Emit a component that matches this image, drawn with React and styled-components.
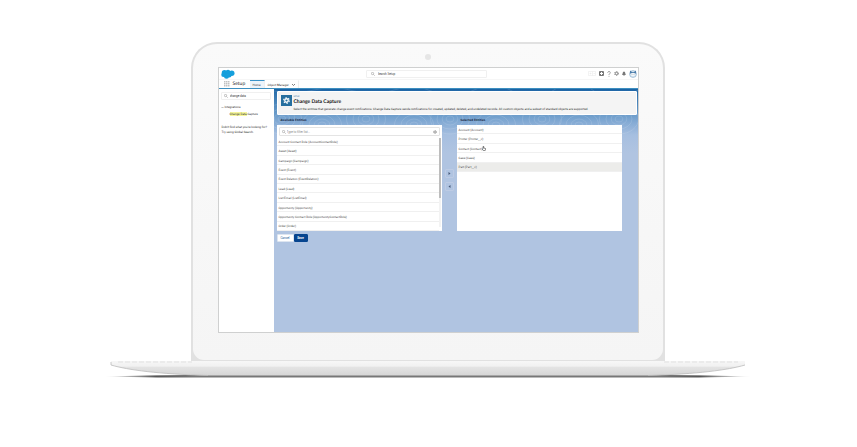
import React from 'react';
import styled, { createGlobalStyle } from 'styled-components';

const GlobalStyle = createGlobalStyle`
  * { box-sizing: border-box; }
  body { margin: 0; background: #fff; }
  body, input, button { font-family: Roboto, "Open Sans", sans-serif; }
  body { font-size: 3px; line-height: 4px; color: #2b2b2b; text-rendering: geometricPrecision; }
  ul, h1, h2, p { margin: 0; padding: 0; list-style: none; }
  svg { display: block; flex: none; }
`;

const Stage = styled.main`
  display: flex;
  flex-direction: column;
  align-items: center;
  padding: 42px 2px 56px 0;
`;

const LidCorner = styled.div`
  width: 100%;
  max-width: 474px;
  border-radius: 26px 26px 0 0;
  background: #e1e1e1;
  padding: 2px 2px 1px;
`;

const Lid = styled.div`
  border-radius: 24px 24px 11px 11px;
  background: linear-gradient(#fafafa, #f5f5f5);
  padding: 10px 24px 27px 25px;
`;

const Camera = styled.div`
  width: 6px;
  height: 6px;
  margin: 0 auto 7px;
  border-radius: 50%;
  background: #e6e6e6;
`;

const Screen = styled.div`
  display: flex;
  flex-direction: column;
  height: 266px;
  border: 1px solid #cfd0d0;
  background: #fff;
  overflow: hidden;
`;

const TopBar = styled.header`
  display: grid;
  grid-template-columns: 145fr 121fr 150fr;
  align-items: center;
  height: 11px;
  padding: 0 1px 0 2px;
`;

const SearchBox = styled.label`
  display: flex;
  align-items: center;
  gap: ${(p) => p.$gap}px;
  height: ${(p) => p.$height || 8}px;
  padding: 0 ${(p) => p.$pad}px;
  border: 1px solid ${(p) => p.$line || '#f0f0f0'};
  border-radius: 1px;
  background: #fff;
  input {
    flex: 1;
    min-width: 0;
    padding: 0;
    border: 0;
    outline: 0;
    background: none;
    font-size: 3px;
    line-height: 4px;
    height: 4px;
    color: #333;
  }
  input::placeholder { color: ${(p) => p.$hint || '#444'}; opacity: 1; }
`;

const Tools = styled.div`
  display: flex;
  justify-content: flex-end;
  align-items: center;
  gap: 3px;
`;

const IconButton = styled.button`
  display: grid;
  place-items: center;
  padding: 0;
  border: 0;
  background: none;
  color: #666;
`;

const NavBar = styled.nav`
  display: flex;
  align-items: center;
  height: 10px;
  padding-left: 5px;
  border-top: 1px solid #f6f6f6;
  border-bottom: 1px solid #3d8fc0;
`;

const AppName = styled.span`
  width: 20px;
  padding-left: 3px;
  font-family: Lato, sans-serif;
  font-size: 5px;
  line-height: 8px;
`;

const Tab = styled.a`
  display: flex;
  align-items: center;
  align-self: stretch;
  gap: 3px;
  padding: 0 3px;
  color: #333;
  text-decoration: none;
  border-top: 1px solid ${(p) => (p.$active ? '#3a93c9' : 'transparent')};
  border-right: 1px solid #eee;
  background: ${(p) => (p.$active ? '#edf4fa' : '#fff')};
`;

const Body = styled.div`
  display: flex;
  flex: 1;
  min-height: 0;
`;

const Sidebar = styled.aside`
  width: 55px;
  flex: none;
  padding: 3px 3px 0 2px;
  background: #fff;
`;

const TreeGroup = styled.div`
  display: flex;
  align-items: center;
  gap: 1px;
  margin-top: 4px;
  height: 6px;
`;

const TreeLink = styled.a`
  display: block;
  margin: 2px 0 9px 9px;
  color: #333;
  text-decoration: none;
  white-space: nowrap;
  mark { background: #f5f59a; color: #333; }
`;

const Hint = styled.p`
  padding-left: 1px;
  line-height: 5px;
  white-space: nowrap;
`;

const Main = styled.section`
  position: relative;
  flex: 1;
  min-width: 0;
  padding: 2px 1px 0 3px;
  background: linear-gradient(#1a62a4 0, #2d71ad 4px, #6d9dcb 26px, #87acd5 34px, #a6bfe0 46px, #b0c4e1 64px, #b0c4e1);
`;

const Contours = styled.svg`
  position: absolute;
  inset: 0 0 auto 0;
  width: 100%;
  height: 46px;
  opacity: 0.12;
`;

const Content = styled.div`
  position: relative;
`;

const PageHeader = styled.header`
  display: flex;
  gap: 2px;
  height: 24px;
  padding: 3px 3px 0;
  border: 1px solid #fff;
  border-radius: 1px;
  background: #f4f4f4;
`;

const AppTile = styled.div`
  display: grid;
  place-items: center;
  flex: none;
  width: 11px;
  height: 11px;
  background: #276f9f;
`;

const Eyebrow = styled.p`
  font-size: 2px;
  line-height: 4px;
  color: #2d6d9f;
`;

const Title = styled.h1`
  font-family: Lato, sans-serif;
  font-size: 5px;
  line-height: 6px;
  font-weight: 700;
  color: #111;
`;

const Summary = styled.p`
  margin-top: 2px;
`;

const Columns = styled.div`
  display: grid;
  grid-template-columns: 11fr 1fr 11fr;
  margin-right: 15px;
`;

const Label = styled.h2`
  padding: 3px 4px;
  font-size: 3px;
  line-height: 4px;
  font-family: "Open Sans", sans-serif;
  font-weight: 700;
  color: #13233a;
`;

const Panel = styled.div`
  display: flex;
  flex-direction: column;
  height: 106px;
  background: #fff;
`;

const FilterArea = styled.div`
  padding: 2px 2px 1px;
`;

const Entities = styled.ul`
  display: flex;
  flex-direction: column;
  flex: 1;
  min-height: 0;
`;

const SelectedEntities = styled(Entities)`
  flex: 0 0 47px;
`;

const Scroll = styled.div`
  display: flex;
  flex: 1;
  min-height: 0;
`;

const ScrollTrack = styled.div`
  width: 2px;
  margin: 1px 1px 4px 0;
  background: #f3f3f3;
  &::before { content: ''; display: block; height: 60px; background: #bdbdbd; }
`;

const Entity = styled.li`
  display: flex;
  align-items: center;
  flex: 1;
  padding: 1px 0 0 2px;
  border-bottom: 1px solid #f0f0f0;
  color: #4a4a4a;
  background: ${(p) => (p.$selected ? '#ececea' : '#fff')};
`;

const Movers = styled.div`
  display: flex;
  flex-direction: column;
  justify-content: center;
  align-items: center;
  gap: 4px;
  padding-top: 14px;
`;

const MoveButton = styled.button`
  display: grid;
  place-items: center;
  width: 9px;
  height: 9px;
  padding: 0;
  border: 1px solid #bdcbe4;
  border-radius: 1px;
  background: #b0c4e1;
`;

const Actions = styled.div`
  display: flex;
  margin-top: 3px;
`;

const Button = styled.button`
  height: 8px;
  width: ${(p) => (p.$primary ? 14 : 17)}px;
  padding: 0;
  border: 1px solid ${(p) => (p.$primary ? '#07458f' : '#dde5f0')};
  border-radius: 1px;
  font-size: 3px;
  line-height: 4px;
  font-weight: ${(p) => (p.$primary ? 700 : 400)};
  color: ${(p) => (p.$primary ? '#fff' : '#245a96')};
  background: ${(p) => (p.$primary ? '#07458f' : '#fff')};
`;

const BaseDrawing = styled.svg`
  width: 100%;
  max-width: 660px;
  height: 24px;
`;

const available = [
  'Account Contact Role (AccountContactRole)',
  'Asset (Asset)',
  'Campaign (Campaign)',
  'Event (Event)',
  'Event Relation (EventRelation)',
  'Lead (Lead)',
  'List Email (ListEmail)',
  'Opportunity (Opportunity)',
  'Opportunity Contact Role (OpportunityContactRole)',
  'Order (Order)',
];

const selected = [
  'Account (Account)',
  'Printer (Printer__c)',
  'Contact (Contact)',
  'Case (Case)',
  'Part (Part__c)',
];

const SearchIcon = () => (
  <svg width="4" height="4" viewBox="0 0 8 8" fill="none" stroke="#888" strokeWidth="1">
    <circle cx="3" cy="3" r="2.3" />
    <path d="M4.8 4.8 7.5 7.5" />
  </svg>
);

const Cloud = () => (
  <svg width="14" height="10" viewBox="0 0 28 20" fill="#159fdc">
    <circle cx="7" cy="7.500" r="5.500" />
    <circle cx="14" cy="6" r="4.500" />
    <circle cx="21.500" cy="8.500" r="5.500" />
    <circle cx="5" cy="11.500" r="4.500" />
    <circle cx="11" cy="14.500" r="5" />
    <circle cx="17" cy="13" r="4" />
  </svg>
);

const Gear = ({ size, color }) => (
  <svg width={size} height={size} viewBox="0 0 16 16" fill="none" stroke={color}>
    <circle cx="8" cy="8" r="4" strokeWidth="3" />
    <circle cx="8" cy="8" r="6.500" strokeWidth="2.400" strokeDasharray="3.4 3.4" />
  </svg>
);

const Tree = () => (
  <svg width="3" height="3" viewBox="0 0 6 6" fill="none" stroke="#777">
    <path d="M1 2 3 4 5 2" />
  </svg>
);

const rings = [8, 48, 92, 140, 176, 222, 268, 305, 345];

export default function App() {
  return (
    <>
      <GlobalStyle />
      <Stage>
        <LidCorner>
          <Lid>
            <Camera />
            <Screen>
              <TopBar>
                <Cloud />
                <SearchBox $gap={3} $pad={4}>
                  <SearchIcon />
                  <input type="search" aria-label="Search Setup" placeholder="Search Setup" />
                </SearchBox>
                <Tools>
                  <IconButton aria-label="Favorites">
                    <svg width="8" height="5" viewBox="0 0 16 10" fill="none" stroke="#e6e6e6">
                      <path d="M1 1h14v8H1zM9 1v8M5 3v4M3 5h4M11 4l1.5 2L14 4" />
                    </svg>
                  </IconButton>
                  <IconButton aria-label="Add">
                    <svg width="5" height="5" viewBox="0 0 10 10">
                      <rect width="10" height="10" rx="2" fill="#777" />
                      <path d="M5 2v6M2 5h6" stroke="#fff" strokeWidth="2" />
                    </svg>
                  </IconButton>
                  <IconButton aria-label="Help">
                    <svg width="4" height="6" viewBox="0 0 8 12" fill="none" stroke="#777" strokeWidth="1.400">
                      <path d="M1.5 3.5C1.5 0 6.5 0 6.5 3.2 6.5 5.5 4 5.2 4 8M4 9.8v1.6" />
                    </svg>
                  </IconButton>
                  <IconButton aria-label="Settings"><Gear size={5} color="#777" /></IconButton>
                  <IconButton aria-label="Notifications">
                    <svg width="4" height="5" viewBox="0 0 8 10" fill="#777">
                      <path d="M0 8C1.5 7 1 1 4 1s2.5 6 4 7zM3 8.5h2V10H3z" />
                    </svg>
                  </IconButton>
                  <IconButton aria-label="Profile">
                    <svg width="8" height="8" viewBox="0 0 16 16">
                      <circle cx="8" cy="8" r="7" fill="#d5e4f0" stroke="#7ba0c1" />
                      <path d="M2 1l4 3h4l4-3v6H2z" fill="#4a7cab" />
                      <ellipse cx="8" cy="8.500" rx="4.500" ry="3.200" fill="#fff" />
                      <path d="M6 7.5v2M10 7.5v2" stroke="#355b7d" />
                    </svg>
                  </IconButton>
                </Tools>
              </TopBar>
              <NavBar aria-label="Setup">
                <svg width="6" height="6" viewBox="0 0 12 12" fill="#c2c2c2">
                  {[0, 4, 8].map((y) => [0, 4, 8].map((x) => <rect key={`${x}-${y}`} x={x} y={y} width="3" height="3" />))}
                </svg>
                <AppName>Setup</AppName>
                <Tab href="#home" $active>Home</Tab>
                <Tab href="#objects">
                  Object Manager
                  <svg width="3" height="3" viewBox="0 0 6 6" fill="none" stroke="#555" strokeWidth="1.500"><path d="M0 2l3 3 3-3" /></svg>
                </Tab>
              </NavBar>
              <Body>
                <Sidebar>
                  <SearchBox $gap={2} $pad={2}>
                    <SearchIcon />
                    <input aria-label="Quick find" defaultValue="change data" />
                  </SearchBox>
                  <TreeGroup><Tree />Integrations</TreeGroup>
                  <TreeLink href="#cdc"><mark>Change Data</mark> Capture</TreeLink>
                  <Hint>Didn't find what you're looking for?</Hint>
                  <Hint>Try using Global Search.</Hint>
                </Sidebar>
                <Main>
                  <Contours viewBox="0 0 364 46" preserveAspectRatio="xMidYMin slice" fill="none" stroke="#fff" strokeWidth="1">
                    {rings.map((x, i) => [3, 6, 10, 15].map((r) => (
                      <ellipse key={`${x}-${r}`} cx={x} cy={i % 2 ? 36 : 30} rx={r * 1.3} ry={r} />
                    )))}
                    <path d="M0 2Q20 6 40 1T80 2 120 1 160 3 200 1 240 3 280 1 320 2 364 1" />
                  </Contours>
                  <Content>
                    <PageHeader>
                      <AppTile><Gear size={7} color="#fff" /></AppTile>
                      <div>
                        <Eyebrow>SETUP</Eyebrow>
                        <Title>Change Data Capture</Title>
                        <Summary>
                          Select the entities that generate change event notifications. Change Data Capture sends
                          notifications for created, updated, deleted, and undeleted records. All custom objects and a
                          subset of standard objects are supported.
                        </Summary>
                      </div>
                    </PageHeader>
                    <Columns>
                      <div>
                        <Label>Available Entities</Label>
                        <Panel>
                          <FilterArea>
                            <SearchBox $height={9} $gap={1} $pad={2} $hint="#888" $line="#e4e4e4">
                              <SearchIcon />
                              <input aria-label="Filter entities" placeholder="Type to filter list..." />
                              <Gear size={4} color="#888" />
                            </SearchBox>
                          </FilterArea>
                          <Scroll>
                            <Entities>
                              {available.map((name) => <Entity key={name}>{name}</Entity>)}
                            </Entities>
                            <ScrollTrack />
                          </Scroll>
                        </Panel>
                      </div>
                      <Movers>
                        <MoveButton aria-label="Add to selected">
                          <svg width="3" height="3" viewBox="0 0 6 6" fill="#445776"><path d="M1 0l4 3-4 3z" /></svg>
                        </MoveButton>
                        <MoveButton aria-label="Remove from selected">
                          <svg width="3" height="3" viewBox="0 0 6 6" fill="#445776"><path d="M5 0L1 3l4 3z" /></svg>
                        </MoveButton>
                      </Movers>
                      <div>
                        <Label>Selected Entities</Label>
                        <Panel>
                          <SelectedEntities>
                            {selected.map((name, i) => (
                              <Entity key={name} $selected={i === 4}>
                                {name}
                                {i === 2 && (
                                  <svg width="4" height="5" viewBox="0 0 8 10" fill="#fff" stroke="#333" strokeWidth="1.200">
                                    <path d="M2 6V1h1.5v3L7 5v2.5L6 9.5H3L.7 6.5z" />
                                  </svg>
                                )}
                              </Entity>
                            ))}
                          </SelectedEntities>
                        </Panel>
                      </div>
                    </Columns>
                    <Actions>
                      <Button type="button">Cancel</Button>
                      <Button type="button" $primary>Save</Button>
                    </Actions>
                  </Content>
                </Main>
              </Body>
            </Screen>
          </Lid>
        </LidCorner>
        <BaseDrawing viewBox="0 0 660 24" preserveAspectRatio="none" aria-hidden="true">
          <defs>
            <linearGradient id="metal" x1="0" y1="0" x2="0" y2="1">
              <stop offset="0" stopColor="#f7f7f7" />
              <stop offset="0.350" stopColor="#f1f1f1" />
              <stop offset="0.450" stopColor="#e3e3e3" />
              <stop offset="1" stopColor="#d6d6d6" />
            </linearGradient>
            <linearGradient id="shade" x1="0" x2="1">
              <stop offset="0" stopColor="#666" stopOpacity="0" />
              <stop offset="0.080" stopColor="#555" />
              <stop offset="0.140" stopColor="#777" />
              <stop offset="0.860" stopColor="#777" />
              <stop offset="0.920" stopColor="#555" />
              <stop offset="1" stopColor="#666" stopOpacity="0" />
            </linearGradient>
          </defs>
          <path d="M6 15.5Q60 13.5 110 14H550Q600 13.5 654 15.5L600 16.5H60z" fill="url(#shade)" />
          <path d="M13 0H647V4C630 9 600 13 550 14.5H110C60 13 30 9 13 4z" fill="url(#metal)" />
          <path d="M13 1V4C30 9 60 13 110 14.5M647 4C630 9 600 13 550 14.5" fill="none" stroke="#bbb" strokeWidth="0.800" />
          <path d="M20 1H94M566 1H640" stroke="#d4d4d4" strokeWidth="0.600" strokeDasharray="5 2" />
        </BaseDrawing>
      </Stage>
    </>
  );
}
